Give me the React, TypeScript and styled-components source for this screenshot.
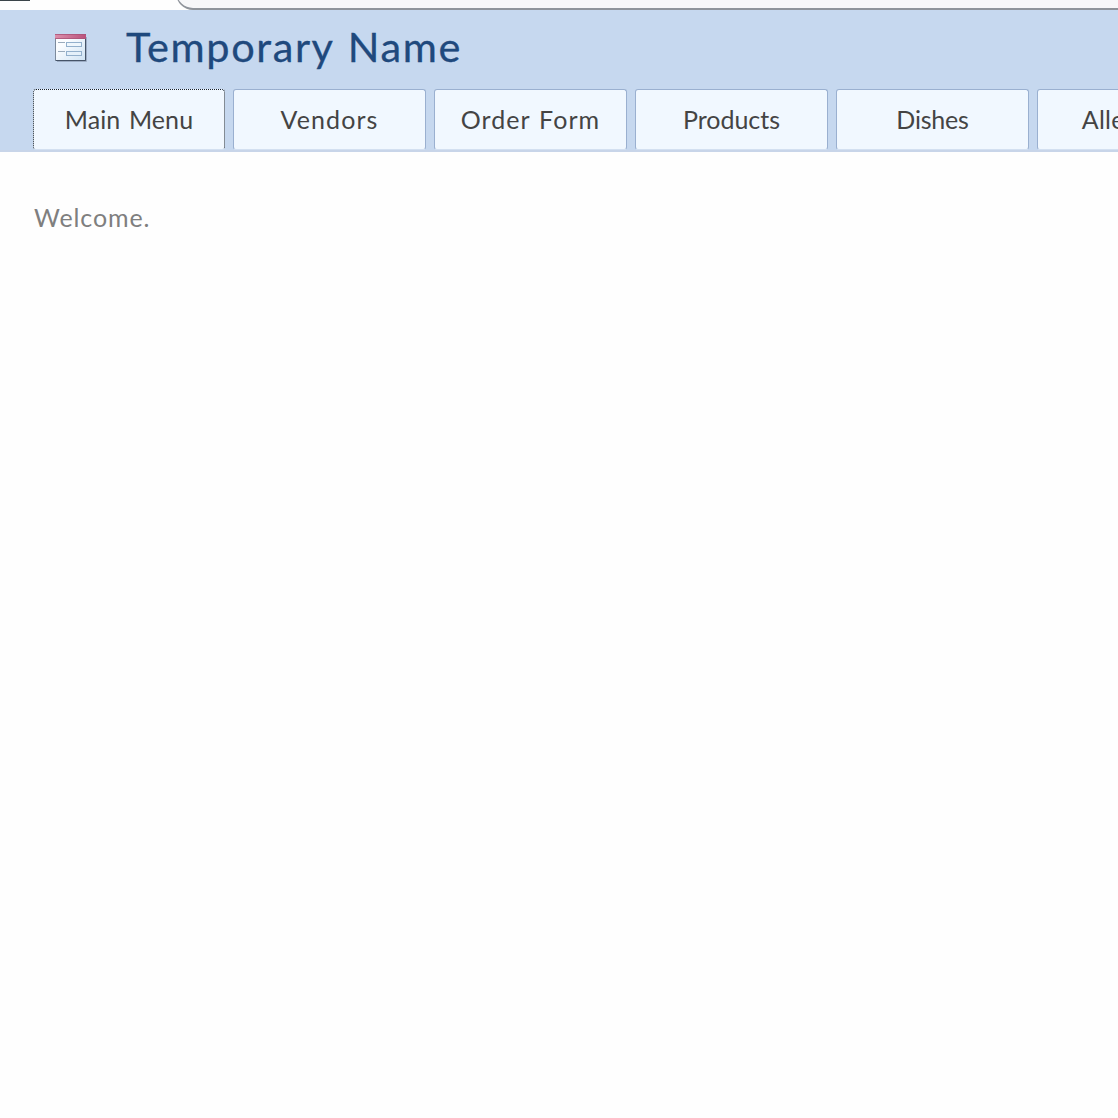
import React from "react";
import styled, { createGlobalStyle } from "styled-components";

const GlobalStyle = createGlobalStyle`
  * { box-sizing: border-box; }
  body { margin: 0; background: #fefefe; overflow: hidden; }
`;

const Page = styled.div`
  width: 100%;
  height: 100vh;
  overflow: hidden;
  background: #fefefe;
  font-family: Lato, "Open Sans", sans-serif;
`;

const WindowStrip = styled.div`
  display: flex;
  height: 10px;
  overflow: hidden;
  justify-content: space-between;
  align-items: flex-start;
`;

const MenuEdge = styled.div`
  width: 30px;
  height: 1px;
  background: #3b444a;
`;

const AddressEdge = styled.div`
  width: 942px;
  height: 40px;
  margin-top: -30px;
  flex: none;
  border: 2px solid #8f949b;
  border-width: 0 0 2px 1.5px;
  border-bottom-left-radius: 17px;
  background: #f7f7f9;
`;

const Header = styled.header`
  height: 142px;
  background: #c6d8ef;
  display: flex;
  flex-direction: column;
`;

const TitleBar = styled.div`
  height: 79px;
  padding-left: 54px;
  display: flex;
  align-items: center;
  gap: 38px;
`;

const FormIcon = styled.svg`
  width: 34px;
  height: 30px;
  margin-top: -3px;
  flex: none;
`;

const Title = styled.h1`
  margin: -8px 0 0;
  font-size: 41.5px;
  line-height: 50px;
  font-weight: 400;
  color: #1f497d;
  letter-spacing: 1.6px;
  word-spacing: 2px;
  white-space: nowrap;
  -webkit-text-stroke: 0.3px #1f497d;
`;

const Tabs = styled.nav`
  display: flex;
  gap: 8px;
  padding-left: 32px;
  height: 63px;
  overflow: hidden;
  border-bottom: 2px solid #c8d5e9;
`;

const Tab = styled.button<{ $focused?: boolean; $spacing: number; $wordSpacing?: number }>`
  flex: none;
  width: ${(p) => (p.$focused ? 192 : 193)}px;
  margin-left: ${(p) => (p.$focused ? 1 : 0)}px;
  height: 61px;
  padding: 0;
  border: 1px ${(p) => (p.$focused ? "dotted #16202c" : "solid #9ab0d0")};
  border-bottom: 1px solid #d3e0f1;
  border-radius: 3px;
  background: #f1f8ff;
  color: #444;
  font: 400 25px/59px Lato, "Open Sans", sans-serif;
  letter-spacing: ${(p) => p.$spacing}px;
  word-spacing: ${(p) => p.$wordSpacing ?? 0}px;
  text-align: center;
  white-space: nowrap;
`;

const Content = styled.main`
  padding: 49px 34px;
`;

const Greeting = styled.p`
  margin: 0;
  font-size: 25px;
  line-height: 32px;
  letter-spacing: 0.9px;
  color: #7f7f7f;
`;

const tabs = [
  { label: "Main Menu", spacing: 0.1, wordSpacing: 2 },
  { label: "Vendors", spacing: 1.1 },
  { label: "Order Form", spacing: 1.05, wordSpacing: 1.5 },
  { label: "Products", spacing: 0 },
  { label: "Dishes", spacing: -0.2 },
  { label: "Allergens", spacing: 0.2 },
];

export default function App() {
  return (
    <Page>
      <GlobalStyle />
      <WindowStrip>
        <MenuEdge />
        <AddressEdge />
      </WindowStrip>
      <Header>
        <TitleBar>
          <FormIcon viewBox="0 0 34 30">
            <defs>
              <linearGradient id="paper" x1="0" y1="0" x2="1" y2="1">
                <stop offset="0.3" stopColor="#fbfdff" />
                <stop offset="1" stopColor="#cfe3f4" />
              </linearGradient>
              <linearGradient id="caption" x1="0" y1="0" x2="1" y2="0">
                <stop offset="0" stopColor="#dc8fab" />
                <stop offset="1" stopColor="#b9527b" />
              </linearGradient>
            </defs>
            <path d="M3 28.5H32.5V4" fill="none" stroke="#9dadc4" strokeWidth="1" />
            <rect x="1.5" y="1.5" width="30" height="26" fill="url(#paper)" stroke="#7c8a9c" />
            <path d="M31.5 2V27.5H2" fill="none" stroke="#465468" />
            <rect x="1" y="1" width="31" height="5" fill="url(#caption)" />
            <path d="M1 1.5H32M1 5.5H32" stroke="#a95478" strokeOpacity="0.8" />
            <path d="M4 9.5H11M4 18.5H11" stroke="#9aabbc" />
            <rect x="12.5" y="9.5" width="15" height="4" fill="#eef6fc" stroke="#93b0cc" />
            <rect x="12.5" y="18.5" width="15" height="4" fill="#e4f0fa" stroke="#93b0cc" />
          </FormIcon>
          <Title>Temporary Name</Title>
        </TitleBar>
        <Tabs>
          {tabs.map((t, i) => (
            <Tab
              key={t.label}
              $focused={i === 0}
              $spacing={t.spacing}
              $wordSpacing={t.wordSpacing}
            >
              {t.label}
            </Tab>
          ))}
        </Tabs>
      </Header>
      <Content>
        <Greeting>Welcome.</Greeting>
      </Content>
    </Page>
  );
}
